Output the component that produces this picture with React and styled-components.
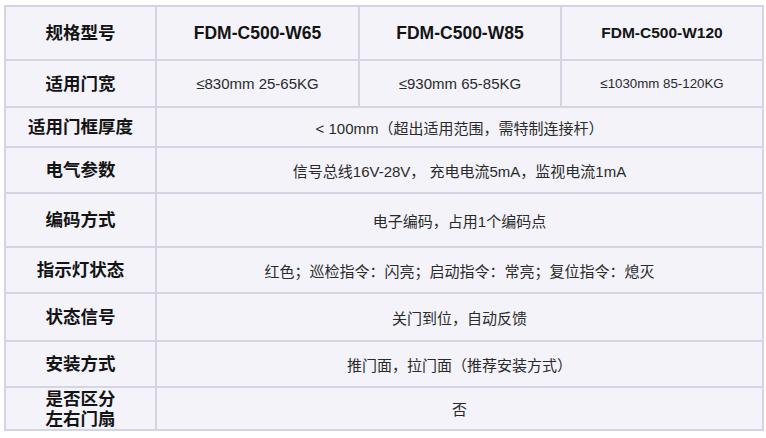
import React from 'react';
import styled, { createGlobalStyle } from 'styled-components';

const GlobalStyle = createGlobalStyle`
  html, body {
    margin: 0;
    padding: 0;
    background: #ffffff;
  }
  body {
    font-family: "Liberation Sans", "Noto Sans CJK SC", sans-serif;
  }
`;

const Page = styled.div`
  padding: 5px 4px 0 4px;
`;

const Table = styled.table`
  width: 758px;
  border-collapse: collapse;
  table-layout: fixed;
  background: #f3f3f9;
  border: 2px solid #d4d5e3;
`;

const Row = styled.tr`
  height: ${({ h }) => h}px;
`;

const Label = styled.th`
  border: 2px solid #d4d5e3;
  padding: 0 4px;
  font-size: 17.5px;
  font-weight: 700;
  line-height: 20px;
  color: #141414;
  text-align: center;
  vertical-align: middle;
`;

const Model = styled.th`
  border: 2px solid #d4d5e3;
  font-size: ${({ small }) => (small ? '15.5px' : '17.5px')};
  font-weight: 700;
  color: #141414;
  text-align: center;
  vertical-align: middle;
`;

const Cell = styled.td`
  border: 2px solid #d4d5e3;
  padding: 0 6px;
  font-size: ${({ small }) => (small ? '13.3px' : '15px')};
  color: #2a2a2a;
  text-align: center;
  vertical-align: middle;
  white-space: nowrap;
`;

const rows = [
  { label: '适用门框厚度', value: '< 100mm（超出适用范围，需特制连接杆）', h: 40 },
  { label: '电气参数', value: '信号总线16V-28V， 充电电流5mA，监视电流1mA', h: 46 },
  { label: '编码方式', value: '电子编码，占用1个编码点', h: 54 },
  { label: '指示灯状态', value: '红色；巡检指令：闪亮；启动指令：常亮；复位指令：熄灭', h: 46 },
  { label: '状态信号', value: '关门到位，自动反馈', h: 48 },
  { label: '安装方式', value: '推门面，拉门面（推荐安装方式）', h: 46 },
];

export default function App() {
  return (
    <Page>
      <GlobalStyle />
      <Table>
        <colgroup>
          <col style={{ width: 151 }} />
          <col style={{ width: 203 }} />
          <col style={{ width: 202 }} />
          <col style={{ width: 202 }} />
        </colgroup>
        <tbody>
          <Row h={54}>
            <Label>规格型号</Label>
            <Model>FDM-C500-W65</Model>
            <Model>FDM-C500-W85</Model>
            <Model small>FDM-C500-W120</Model>
          </Row>
          <Row h={47}>
            <Label>适用门宽</Label>
            <Cell>≤830mm 25-65KG</Cell>
            <Cell>≤930mm 65-85KG</Cell>
            <Cell small>≤1030mm 85-120KG</Cell>
          </Row>
          {rows.map((r) => (
            <Row h={r.h} key={r.label}>
              <Label>{r.label}</Label>
              <Cell colSpan={3}>{r.value}</Cell>
            </Row>
          ))}
          <Row h={43}>
            <Label>
              是否区分
              <br />
              左右门扇
            </Label>
            <Cell colSpan={3}>否</Cell>
          </Row>
        </tbody>
      </Table>
    </Page>
  );
}
